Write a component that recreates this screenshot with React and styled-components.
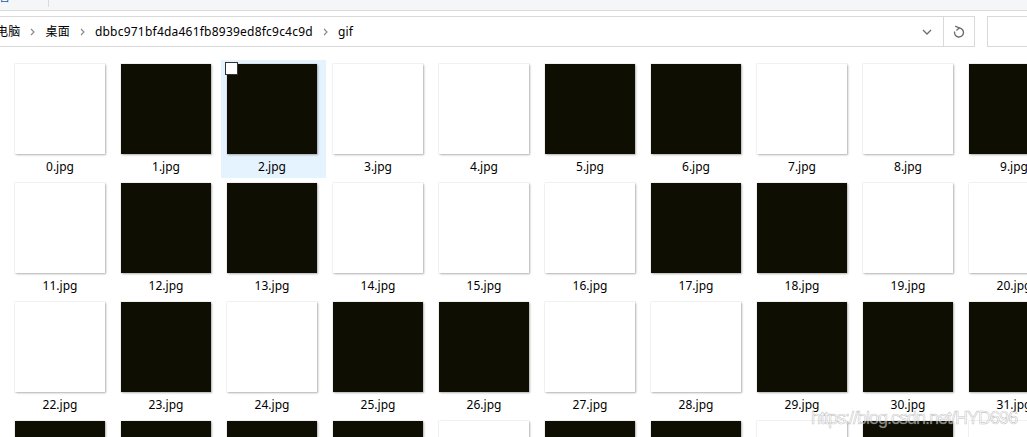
import React from "react";
import styled, { createGlobalStyle } from "styled-components";

const GlobalStyle = createGlobalStyle`
	html, body {
		margin: 0;
		padding: 0;
		background: #fff;
		overflow: hidden;
	}
`;

const rows = [
	{ start: 0, pattern: "WBBWWBBWWBW" },
	{ start: 11, pattern: "WBBWWWBBWWW" },
	{ start: 22, pattern: "WBWBBWWBBBW" },
	{ start: 33, pattern: "BBBBWBBWBWW" },
];

const crumbs = ["电脑", "桌面", "dbbc971bf4da461fb8939ed8fc9c4c9d", "gif"];

const Chevron = () => (
	<svg width="5" height="8" viewBox="0 0 5 8">
		<path d="M1 1 L4 4 L1 7" fill="none" stroke="#8a8a8a" strokeWidth="1.2" />
	</svg>
);

const App = () => {
	return (
		<Page>
			<GlobalStyle />
			<Ribbon>
				<Tab>查看</Tab>
				<TabDivider />
			</Ribbon>
			<AddressRow>
				<AddressBox>
					<Crumbs>
						{crumbs.map((c, i) => (
							<React.Fragment key={c}>
								<Crumb>{c}</Crumb>
								{i < crumbs.length - 1 && (
									<Sep>
										<Chevron />
									</Sep>
								)}
							</React.Fragment>
						))}
					</Crumbs>
					<DropButton>
						<svg width="10" height="6" viewBox="0 0 10 6">
							<path d="M1 1 L5 5 L9 1" fill="none" stroke="#6d6d6d" strokeWidth="1.3" />
						</svg>
					</DropButton>
				</AddressBox>
				<RefreshButton>
					<svg width="12" height="13" viewBox="0 0 12 13">
						<path
							d="M6 3 A4.5 4.5 0 1 1 1.6 6.5"
							fill="none"
							stroke="#6d6d6d"
							strokeWidth="1.4"
						/>
						<path d="M2.2 1.2 L6.2 3 L3.4 5.6" fill="none" stroke="#6d6d6d" strokeWidth="1.3" />
					</svg>
				</RefreshButton>
				<SearchBox />
			</AddressRow>
			<Grid>
				{rows.map(row =>
					row.pattern.split("").map((p, i) => {
						const n = row.start + i;
						return (
							<Item key={n} selected={n === 2}>
								{n === 2 && <Check />}
								<Thumb dark={p === "B"} />
								<Label>{n}.jpg</Label>
							</Item>
						);
					})
				)}
			</Grid>
			<Watermark>https://blog.csdn.net/HYD696</Watermark>
		</Page>
	);
};

export default App;

const Page = styled.div`
	position: relative;
	width: 1027px;
	height: 437px;
	overflow: hidden;
	background: #fff;
	font-family: "Noto Sans", "Noto Sans CJK SC", sans-serif;
`;

const Ribbon = styled.div`
	display: flex;
	align-items: flex-start;
	height: 10px;
	background: #f5f6f7;
	border-bottom: 1px solid #dadbdc;
	overflow: hidden;
`;

const Tab = styled.div`
	margin: -13px 0 0 -14px;
	width: 40px;
	font-size: 12px;
	line-height: 18px;
	color: #1e5fa8;
	font-family: "Noto Sans CJK SC", sans-serif;
`;

const TabDivider = styled.div`
	margin-left: 22px;
	width: 1px;
	height: 7px;
	background: #dadbdc;
`;

const AddressRow = styled.div`
	display: flex;
	margin-top: 5px;
	height: 31px;
`;

const AddressBox = styled.div`
	display: flex;
	align-items: center;
	justify-content: space-between;
	margin-left: -10px;
	width: 953px;
	box-sizing: border-box;
	border: 1px solid #d9d9d9;
	border-right: none;
`;

const Crumbs = styled.div`
	display: flex;
	align-items: center;
	padding-left: 5px;
`;

const Crumb = styled.span`
	font-size: 12px;
	line-height: 16px;
	letter-spacing: 0.22px;
	color: #000;
	white-space: nowrap;
`;

const Sep = styled.span`
	display: flex;
	align-items: center;
	padding: 0 10px 0 10px;
	height: 16px;
`;

const DropButton = styled.div`
	display: flex;
	align-items: center;
	justify-content: center;
	width: 30px;
	margin-right: 1px;
`;

const RefreshButton = styled.div`
	display: flex;
	align-items: center;
	justify-content: center;
	width: 32px;
	box-sizing: border-box;
	border: 1px solid #d9d9d9;
`;

const SearchBox = styled.div`
	margin-left: 12px;
	flex: 1;
	box-sizing: border-box;
	border: 1px solid #d9d9d9;
	border-right: none;
`;

const Grid = styled.div`
	display: grid;
	grid-template-columns: repeat(11, 105px);
	grid-auto-rows: 118px;
	column-gap: 1px;
	row-gap: 1px;
	margin-top: 13px;
	padding-left: 9px;
`;

const Item = styled.div`
	position: relative;
	display: flex;
	flex-direction: column;
	padding: 4px 0 0 6px;
	box-sizing: border-box;
	background: ${p => (p.selected ? "#e5f3ff" : "transparent")};
`;

const Check = styled.div`
	position: absolute;
	top: 2px;
	left: 4px;
	width: 13px;
	height: 13px;
	box-sizing: border-box;
	background: #fff;
	border: 1px solid #333;
	z-index: 1;
`;

const Thumb = styled.div`
	width: 90px;
	height: 90px;
	background: ${p => (p.dark ? "#0e0e02" : "#fff")};
	box-shadow: 0 0 0 1px rgba(0, 0, 0, 0.04), 1px 1px 2px rgba(0, 0, 0, 0.28);
`;

const Label = styled.div`
	width: 90px;
	margin-top: 5px;
	text-align: center;
	font-size: 12px;
	line-height: 16px;
	color: #000;
`;

const Watermark = styled.div`
	position: absolute;
	left: 811px;
	top: 408px;
	font-family: "Liberation Sans", Arial, sans-serif;
	font-size: 18px;
	letter-spacing: -1px;
	color: rgba(255, 255, 255, 0.55);
	-webkit-text-stroke: 0.6px rgba(120, 120, 120, 0.45);
	white-space: nowrap;
`;
